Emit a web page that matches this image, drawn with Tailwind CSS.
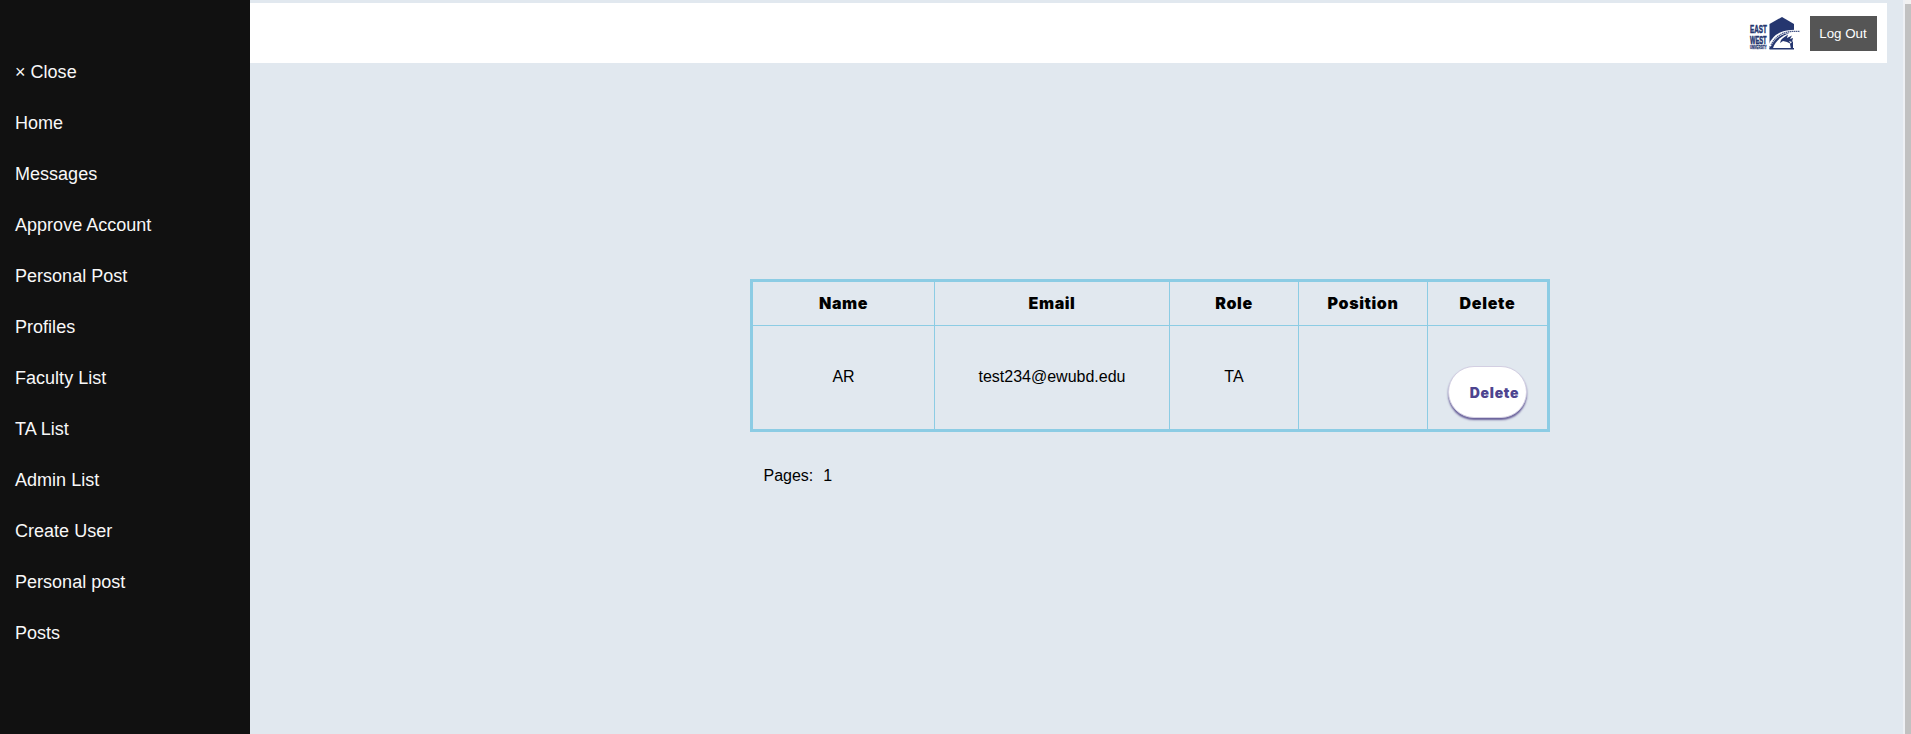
<!DOCTYPE html>
<html lang="en">
<head>
<meta charset="utf-8">
<title>Accounts</title>
<script src="https://cdn.jsdelivr.net/npm/@tailwindcss/browser@4"></script>
</head>
<body class="flex h-[734px] overflow-hidden bg-[#e1e8ef] font-['Liberation_Sans',Arial,sans-serif] text-black">
  <nav class="flex w-[250px] shrink-0 flex-col bg-[#111] pt-[46.5px] pl-[15px] text-[18px] leading-[51px] tracking-[0.02px] text-[#f8f8f8]">
    <a>× Close</a>
    <a>Home</a>
    <a>Messages</a>
    <a>Approve Account</a>
    <a>Personal Post</a>
    <a>Profiles</a>
    <a>Faculty List</a>
    <a>TA List</a>
    <a>Admin List</a>
    <a>Create User</a>
    <a>Personal post</a>
    <a>Posts</a>
  </nav>
  <main class="min-w-0 flex-1 pt-[3px]">
    <header class="mr-4 flex h-[60px] items-start justify-end bg-white pt-[13px] pr-[10px]">
      <svg class="mr-[9px] h-[35px] w-[52px]" viewBox="0 0 52 35" font-family="Liberation Sans" font-weight="700" fill="#25366f">
        <text transform="translate(1 17.300) scale(.6 1)" font-size="10.500" stroke="#25366f" stroke-width=".5">EAST</text>
        <text transform="translate(1 27.700) scale(.5 1)" font-size="11.500" stroke="#25366f" stroke-width=".6">WEST</text>
        <text transform="translate(1 32.800) scale(.6 1)" font-size="4.600" stroke="#25366f" stroke-width=".3">UNIVERSITY</text>
        <path d="M20.500 8 33 1 45 8V33H20.500Z"/>
        <path d="M24 32C26 26 31 21 38 18L45 15V32Z" fill="#fff"/>
        <path d="M20.500 30C26 18 35 14.500 51 15.500" fill="none" stroke="#fff" stroke-width="3"/>
        <path d="M22 29C28 18 36 14.500 51 15.500" fill="none" stroke="#4c5b8b" stroke-width="1.300" stroke-dasharray="1.500 .5"/>
        <path d="M34 22 39 18.500 38 22 43 19.500 41 23 44 22 43 26 40 25 42 28 38 26 34 25 31 27Q31 24 34 22Z"/>
        <path d="M41 28 44 25V33H42Z"/>
        <path d="M20.500 32H45V33.500H20.500Z"/>
      </svg>
      <button class="h-[35px] w-[67px] bg-[#555] pr-px text-[13.33px] text-white">Log Out</button>
    </header>
    <section class="pt-[216px] pl-[500px]">
      <div class="grid w-[800px] grid-cols-[182px_235px_129px_129px_119px] grid-rows-[44px_103px] border-[3px] border-[#8ccce4] text-center text-[16px] *:flex *:items-center *:justify-center">
        <b class="border-r border-b border-[#8ccce4] pb-px font-['Inter'] text-[16px] font-black tracking-[0.6px]">Name</b>
        <b class="border-r border-b border-[#8ccce4] pb-px font-['Inter'] text-[16px] font-black tracking-[0.6px]">Email</b>
        <b class="border-r border-b border-[#8ccce4] pb-px font-['Inter'] text-[16px] font-black tracking-[0.6px]">Role</b>
        <b class="border-r border-b border-[#8ccce4] pb-px font-['Inter'] text-[16px] font-black tracking-[0.6px]">Position</b>
        <b class="border-b border-[#8ccce4] pb-px font-['Inter'] text-[16px] font-black tracking-[0.7px]">Delete</b>
        <div class="border-r border-[#8ccce4] pb-px">AR</div>
        <div class="border-r border-[#8ccce4] pb-px">test234@ewubd.edu</div>
        <div class="border-r border-[#8ccce4] pb-px">TA</div>
        <div class="border-r border-[#8ccce4]"></div>
        <div class="pt-[29px]">
          <button class="h-[52px] w-[79px] rounded-[26px] border border-[#d3cfe2] bg-white pl-[14px] font-['Inter'] text-[14px] font-black tracking-[0.7px] text-[#4d448f] shadow-[0_2px_2px_#685f99]">Delete</button>
        </div>
      </div>
      <div class="flex gap-[10px] pt-[32px] pl-[13.500px] text-[16px]"><span>Pages:</span><span>1</span></div>
    </section>
  </main>
  <aside class="flex w-2 shrink-0 flex-col border-l-2 border-[#eef0f4] bg-[#f1f1f1] pt-1"><div class="flex-1 bg-[#c1c1c1]"></div></aside>
</body>
</html>
